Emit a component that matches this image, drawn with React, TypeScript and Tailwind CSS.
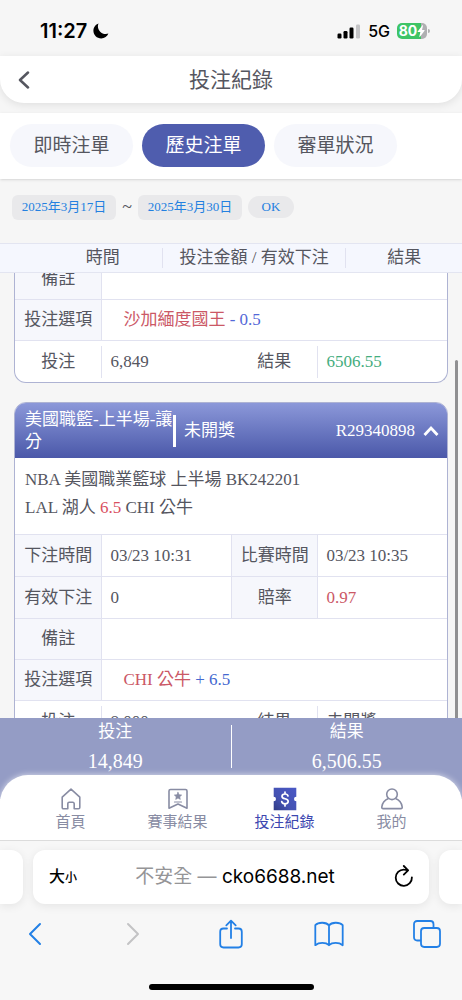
import { useState } from 'react';
import type { ReactNode } from 'react';
import clsx from 'clsx';

const tabs = ['即時注單', '歷史注單', '審單狀況'];

function MoonIcon() {
  return (
    <svg viewBox="0 0 16 16" className="h-4 w-4" fill="currentColor" aria-hidden="true">
      <path d="M5.6.6C2.6 1.6.4 4.500.4 7.800c0 4.300 3.500 7.700 7.800 7.700 3.300 0 6.100-2 7.200-4.900-.8.3-1.700.4-2.600.4-4.400 0-7.900-3.500-7.900-7.800 0-.9.2-1.800.7-2.600z" />
    </svg>
  );
}

function SignalIcon() {
  return (
    <svg viewBox="0 0 24 15" className="h-[15px] w-6" fill="currentColor" aria-hidden="true">
      <rect x="0.500" y="9.500" width="4" height="5" rx="1.200" />
      <rect x="6.500" y="7" width="4" height="7.500" rx="1.200" />
      <rect x="12.500" y="3.500" width="4" height="11" rx="1.200" />
      <rect x="19" y="0.500" width="4" height="14" rx="1.200" fill="#c4c4c6" />
    </svg>
  );
}

function Battery() {
  return (
    <div className="flex items-center gap-px">
      <div className="flex h-4 w-[30px] items-center justify-center overflow-hidden rounded-[5px] bg-linear-to-r from-[#3ec466] from-80% to-[#b0b0b2] to-80% text-white">
        <span className="text-sm leading-4 font-bold">80</span>
        <svg viewBox="0 0 8 12" className="h-3 w-2" fill="currentColor" aria-hidden="true">
          <path d="M5.400.3.700 6.500c-.2.3 0 .6.3.6h2.400l-1.100 4.300c-.1.5.4.7.7.4l4.500-6.100c.2-.3 0-.6-.3-.6H5l1-4.400c.100-.5-.3-.7-.6-.4z" />
        </svg>
      </div>
      <div className="h-1 w-0.5 rounded-r-sm bg-[#b0b0b2]" />
    </div>
  );
}

function HomeIcon() {
  return (
    <svg viewBox="0 0 24 24" className="h-6 w-6" fill="none" stroke="currentColor" strokeWidth="1.600" strokeLinejoin="round" strokeLinecap="round" aria-hidden="true">
      <path d="M3.200 10.200 12 2.200l8.800 8v10.200c0 .8-.5 1.300-1.300 1.300h-4.300v-5c0-.8-.6-1.400-1.400-1.400h-3.600c-.8 0-1.400.6-1.400 1.400v5H4.500c-.8 0-1.300-.5-1.300-1.300z" />
    </svg>
  );
}

function ResultIcon() {
  return (
    <svg viewBox="0 0 24 24" className="h-6 w-6" fill="none" stroke="currentColor" strokeWidth="1.600" strokeLinejoin="round" strokeLinecap="round" aria-hidden="true">
      <path d="M4.500 2.500h15c.9 0 1.500.6 1.500 1.500v17.200L12 17l-9 4.200V4c0-.9.6-1.500 1.500-1.500z" />
      <path d="m12 5.300 1.100 2.400 2.600.3-1.900 1.800.5 2.600-2.300-1.300-2.300 1.300.5-2.600L8.300 8l2.600-.3z" fill="currentColor" strokeWidth="0.600" />
      <path d="M8.500 15h7" strokeWidth="1.200" />
    </svg>
  );
}

function RecordIcon() {
  return (
    <svg viewBox="0 0 24 24" className="h-6 w-6" aria-hidden="true">
      <defs>
        <linearGradient id="ticket" x1="1" y1="0" x2="0" y2="1">
          <stop offset="0" stopColor="#4a58c6" />
          <stop offset="0.6" stopColor="#4452b2" />
          <stop offset="1" stopColor="#2f3a85" />
        </linearGradient>
      </defs>
      <path d="M.7.700h22.600v9a2.300 2.300 0 0 0 0 4.600v9H.700v-9a2.300 2.300 0 0 0 0-4.600z" fill="url(#ticket)" />
      <path d="M15 9c-.3-1.300-1.400-2-3-2-1.700 0-3 .9-3 2.400 0 3.200 6.200 1.600 6.200 4.900 0 1.600-1.400 2.500-3.200 2.500s-3-.8-3.300-2.300M12 5v1.800M12 17v1.900" fill="none" stroke="#fff" strokeWidth="1.700" strokeLinecap="round" />
    </svg>
  );
}

function ProfileIcon() {
  return (
    <svg viewBox="0 0 24 24" className="h-6 w-6" fill="none" stroke="currentColor" strokeWidth="1.600" strokeLinejoin="round" aria-hidden="true">
      <circle cx="12" cy="7.300" r="5.300" />
      <path d="M8.500 11.600c-3.500 1.300-6.200 4.600-6.700 8.400-.1 1 .4 1.600 1.300 1.600h17.800c.9 0 1.400-.6 1.300-1.600-.5-3.800-3.200-7.100-6.700-8.400" />
    </svg>
  );
}

const navItems = [
  { label: '首頁', icon: HomeIcon },
  { label: '賽事結果', icon: ResultIcon },
  { label: '投注紀錄', icon: RecordIcon, active: true },
  { label: '我的', icon: ProfileIcon },
];

function Label({ divider, children }: { divider?: boolean; children: ReactNode }) {
  return (
    <th
      scope="row"
      className={clsx('border-t border-[#e1e2f0] bg-[#f6f7fc] p-0 text-center font-normal', divider && 'border-l')}
    >
      {children}
    </th>
  );
}

function Value({ children }: { children: ReactNode }) {
  return <td className="border-t border-l border-[#e1e2f0] py-0 pr-0 pl-2">{children}</td>;
}

function WideRow({ label, children }: { label: string; children?: ReactNode }) {
  return (
    <tr className="h-[41px]">
      <Label>{label}</Label>
      <td colSpan={3} className="border-t border-l border-[#e1e2f0] py-0 pr-0 pl-[21px]">
        {children}
      </td>
    </tr>
  );
}

// Last row has no label shading and shorter dividers
function TotalRow({ bet, result }: { bet: string; result: ReactNode }) {
  return (
    <tr className="h-[42px]">
      <th scope="row" className="border-t border-[#e1e2f0] p-0 text-center font-normal">投注</th>
      <td className="border-t border-[#e1e2f0] p-0">
        <div className="h-8 border-l border-[#e1e2f0] pl-2 leading-8">{bet}</div>
      </td>
      <th scope="row" className="border-t border-[#e1e2f0] p-0 text-center font-normal">結果</th>
      <td className="border-t border-[#e1e2f0] p-0">
        <div className="h-8 border-l border-[#e1e2f0] pl-2 leading-8">{result}</div>
      </td>
    </tr>
  );
}

function BetTable({ children }: { children: ReactNode }) {
  return (
    <table className="w-full table-fixed border-separate border-spacing-0">
      <colgroup>
        <col className="w-[20%]" />
        <col className="w-[30%]" />
        <col className="w-[20%]" />
        <col className="w-[30%]" />
      </colgroup>
      <tbody>{children}</tbody>
    </table>
  );
}

export default function App() {
  const [tab, setTab] = useState('歷史注單');
  const [open, setOpen] = useState(true);

  return (
    <div className="flex h-screen flex-col overflow-hidden bg-[#f6f6f6] font-['Liberation_Serif','Noto_Sans_CJK_TC',serif] text-[17px] text-[#55565f]">
      {/* Status bar */}
      <div className="flex h-14 shrink-0 items-center justify-between pt-1.5 pr-8 pl-10 font-['Inter',sans-serif] text-black">
        <div className="flex items-center gap-1.5">
          <span className="text-xl font-semibold">11:27</span>
          <MoonIcon />
        </div>
        <div className="flex items-center gap-[7px]">
          <SignalIcon />
          <span className="text-base font-medium">5G</span>
          <Battery />
        </div>
      </div>

      <header className="grid h-[47px] shrink-0 grid-cols-[48px_1fr_48px] items-center rounded-b-3xl bg-white shadow-[0_2px_8px_#00000018]">
        <button type="button" aria-label="返回" className="flex h-full items-center justify-center">
          <svg viewBox="0 0 12 18" className="h-[18px] w-3" fill="none" stroke="currentColor" strokeWidth="2.500" strokeLinecap="round" strokeLinejoin="round">
            <path d="M10 1.500 2 9l8 7.500" />
          </svg>
        </button>
        <h1 className="pt-0.5 text-center text-[21px]">投注紀錄</h1>
      </header>

      <div className="mt-2.5 flex shrink-0 gap-[9px] bg-white px-2.5 pt-[11px] pb-3 shadow-sm">
        {tabs.map((name) => (
          <button
            key={name}
            type="button"
            onClick={() => setTab(name)}
            className={clsx(
              'h-[43px] w-[123px] rounded-full pt-0.5 text-[19px]',
              tab === name ? 'bg-[#4f5dae] text-white' : 'bg-[#f6f7fc]'
            )}
          >
            {name}
          </button>
        ))}
      </div>

      <div className="flex h-16 shrink-0 items-center gap-1.5 px-3 pb-2 text-[13px] text-[#2380e0]">
        <input
          aria-label="開始日期"
          readOnly
          value="2025年3月17日"
          className="h-[25px] w-[104px] rounded-md bg-[#e9e9eb] pb-1 text-center"
        />
        <span className="w-2.5 text-center text-lg leading-6 text-[#55565f]">~</span>
        <input
          aria-label="結束日期"
          readOnly
          value="2025年3月30日"
          className="h-[25px] w-[104px] rounded-md bg-[#e9e9eb] pb-1 text-center"
        />
        <button type="button" className="h-[22px] w-[46px] rounded-full bg-[#e9e9eb]">OK</button>
      </div>

      <div className="grid h-[30px] shrink-0 grid-cols-[35%_40%_25%] items-center border-y border-[#e3e5f1] bg-[#f5f7fe] text-center leading-5">
        <div className="pl-11">時間</div>
        <div className="border-x border-[#e1e2f0]">投注金額 / 有效下注</div>
        <div>結果</div>
      </div>

      <main className="relative min-h-0 flex-1 overflow-hidden px-3.5">
        <section className="-mt-[15px] overflow-hidden rounded-b-xl border border-t-0 border-[#aeb3d3] bg-white">
          <BetTable>
            <WideRow label="備註" />
            <WideRow label="投注選項">
              <span className="text-[#cb5866]">沙加緬度國王</span> <span className="text-[#5468d8]">- 0.5</span>
            </WideRow>
            <TotalRow bet="6,849" result={<span className="text-[#45ad7e]">6506.55</span>} />
          </BetTable>
        </section>

        <section className="mt-[19px] overflow-hidden rounded-xl border border-[#aeb3d3] bg-white">
          <div className="flex h-[55px] items-center bg-linear-to-b from-[#8c98d9] to-[#4b58a9] pr-2 pl-2.5 text-white">
            <h2 className="w-[148px] leading-[22px]">美國職籃-上半場-讓分</h2>
            <div className="h-8 w-[3px] bg-white" />
            <span className="pl-2">未開獎</span>
            <span className="ml-auto">R29340898</span>
            <button type="button" aria-label="收合" aria-expanded={open} onClick={() => setOpen(!open)} className="ml-2">
              <svg viewBox="0 0 16 12" className="h-3 w-4" fill="none" stroke="currentColor" strokeWidth="2.800">
                <path d="m1.500 10 6.500-7 6.500 7" />
              </svg>
            </button>
          </div>
          {open && (
            <>
              <div className="px-2.5 pt-2 pb-3 leading-7">
                <p>NBA 美國職業籃球 上半場 BK242201</p>
                <p>
                  LAL 湖人 <span className="text-[#d9505f]">6.5</span> CHI 公牛
                </p>
              </div>
              <BetTable>
                <tr className="h-[42px]">
                  <Label>下注時間</Label>
                  <Value>03/23 10:31</Value>
                  <Label divider>比賽時間</Label>
                  <Value>03/23 10:35</Value>
                </tr>
                <tr className="h-[42px]">
                  <Label>有效下注</Label>
                  <Value>0</Value>
                  <Label divider>賠率</Label>
                  <Value>
                    <span className="text-[#cb5866]">0.97</span>
                  </Value>
                </tr>
                <WideRow label="備註" />
                <WideRow label="投注選項">
                  <span className="text-[#cb5866]">CHI 公牛</span> <span className="text-[#4468d0]">+ 6.5</span>
                </WideRow>
                <TotalRow bet="8,000" result="未開獎" />
              </BetTable>
            </>
          )}
        </section>

        {/* Scroll thumb */}
        <div className="absolute top-[87px] right-1 bottom-0 w-[3px] rounded-t-full bg-[#909092]" />
      </main>

      <div className="grid h-[81px] shrink-0 grid-cols-[1fr_1px_1fr] bg-[#949cc5] text-center text-white">
        <div className="pt-1">
          <div className="leading-5">投注</div>
          <div className="text-xl leading-[38px]">14,849</div>
        </div>
        <div className="mt-[7px] h-[43px] bg-white" />
        <div className="pt-1">
          <div className="leading-5">結果</div>
          <div className="text-xl leading-[38px]">6,506.55</div>
        </div>
      </div>

      <nav className="relative -mt-6 grid h-[65px] shrink-0 grid-cols-4 rounded-t-[28px] bg-white px-[17px] pt-3 shadow-[0_0_6px_#ffffffb0]">
        {navItems.map(({ label, icon: Icon, active }) => (
          <a
            key={label}
            href="#"
            className={clsx('flex flex-col items-center text-[15px] leading-[22px]', active ? 'text-[#3c47b0]' : 'text-[#888ca3]')}
          >
            <Icon />
            {label}
          </a>
        ))}
      </nav>

      {/* Browser chrome */}
      <footer className="relative shrink-0 border-t border-[#dcdcdc] bg-[#f7f7f7] pt-[9px] font-['Inter','Noto_Sans_CJK_TC',sans-serif]">
        <div className="flex h-[54px] gap-2.5">
          <div className="w-[23px] rounded-r-xl bg-white shadow-[0_2px_10px_#00000014]" />
          <div className="flex flex-1 items-center justify-between rounded-xl bg-white px-4 shadow-[0_2px_10px_#00000014]">
            <button type="button" className="font-medium text-black">
              <span className="text-base">大</span>
              <span className="text-xs">小</span>
            </button>
            <div className="text-[19px] text-[#959597]">
              不安全 — <span className="text-black">cko6688.net</span>
            </div>
            <button type="button" aria-label="重新整理" className="text-black">
              <svg viewBox="0 0 20 24" className="h-6 w-5" fill="none" stroke="currentColor" strokeWidth="1.800" strokeLinecap="round" strokeLinejoin="round">
                <path d="M14.500 5.100c-1-.4-2.300-.5-3.500-.5A8.100 8.100 0 1 0 18.900 12.300" />
                <path d="m10.800 1 4.300 4.300-4.300 4.300" />
              </svg>
            </button>
          </div>
          <div className="w-[23px] rounded-l-xl bg-white shadow-[0_2px_10px_#00000014]" />
        </div>

        <div className="flex h-[60px] items-center justify-between px-5 text-[#2380e6]">
          <button type="button" aria-label="上一頁" className="flex w-[30px] justify-center">
            <svg viewBox="0 0 14 24" className="h-6 w-3.5" fill="none" stroke="currentColor" strokeWidth="2" strokeLinecap="round" strokeLinejoin="round">
              <path d="M12 2 2 12l10 10" />
            </svg>
          </button>
          <button type="button" aria-label="下一頁" className="flex w-[30px] justify-center text-[#c3c3c5]">
            <svg viewBox="0 0 14 24" className="h-6 w-3.5" fill="none" stroke="currentColor" strokeWidth="2" strokeLinecap="round" strokeLinejoin="round">
              <path d="m2 2 10 10L2 22" />
            </svg>
          </button>
          <button type="button" aria-label="分享" className="flex w-[30px] justify-center">
            <svg viewBox="0 0 24 30" className="h-[30px] w-6" fill="none" stroke="currentColor" strokeWidth="1.800" strokeLinecap="round" strokeLinejoin="round">
              <path d="M8 9.500H4.500C2.500 9.500 1.200 10.700 1.200 12.700v12.600c0 2 1.300 3.200 3.300 3.200h15c2 0 3.300-1.200 3.300-3.200V12.700c0-2-1.300-3.200-3.300-3.200H16" />
              <path d="M12 19V1.800M7.300 6.300 12 1.600l4.700 4.700" />
            </svg>
          </button>
          <button type="button" aria-label="書籤" className="flex w-[30px] justify-center">
            <svg viewBox="0 0 30 26" className="h-[26px] w-[30px]" fill="none" stroke="currentColor" strokeWidth="1.800" strokeLinecap="round" strokeLinejoin="round">
              <path d="M15 4.500C12.500 1 4.500.8 1.300 4.200v20c3.700-3 10.500-3 13.700 0 3.200-3 10-3 13.700 0v-20C25.500.8 17.500 1 15 4.500zM15 4.500v19.700" />
            </svg>
          </button>
          <button type="button" aria-label="分頁" className="flex w-[30px] justify-center">
            <svg viewBox="0 0 28 28" className="h-7 w-7" fill="none" stroke="currentColor" strokeWidth="1.800" strokeLinejoin="round">
              <rect x="8" y="8" width="19" height="19" rx="3.200" />
              <path d="M8 20.500H4.200C2.200 20.500 1 19.300 1 17.300V4.200C1 2.200 2.200 1 4.200 1h13.100c2 0 3.200 1.200 3.200 3.200V8" />
            </svg>
          </button>
        </div>

        <div className="flex h-9 items-center justify-center pt-2.5">
          <div className="h-1.5 w-[165px] rounded-full bg-black" />
        </div>
      </footer>
    </div>
  );
}
